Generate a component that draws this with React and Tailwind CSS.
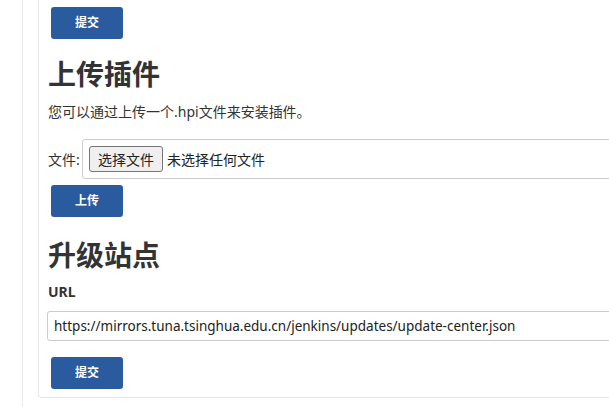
import React from 'react';

const font = { fontFamily: '"Noto Sans", "Noto Sans CJK SC", sans-serif' };

const BlueButton = ({ children }) => (
    <button className="ml-[3px] w-[72px] h-[32px] rounded-[3px] bg-[#2b5b9f] text-white text-[12px] font-bold">
        {children}
    </button>
);

export default function App() {
    return (
        <div className="w-[609px] h-[407px] overflow-hidden bg-white flex text-[#333]" style={font}>
            <div className="w-[22px] shrink-0" />
            <div className="border-l border-[#ececec] pl-[15px] h-full">
                {/* Card */}
                <div className="w-[640px] border-l border-r border-b border-[#e6e6e6] rounded-b-[4px] pl-[9px] pt-[7px] pb-[8px]">
                    <BlueButton>提交</BlueButton>

                    {/* Upload plugin */}
                    <h2 className="mt-[18px] text-[28px] leading-[34px] font-bold">上传插件</h2>
                    <p className="mt-[11px] text-[14px] leading-[20px]">您可以通过上传一个.hpi文件来安装插件。</p>

                    <div className="mt-[17px] flex items-center">
                        <span className="w-[34px] shrink-0 text-[14px] whitespace-nowrap">文件:</span>
                        <div className="flex-1 h-[40px] border border-[#cccccc] rounded-[3px] pl-[6px] flex items-center">
                            <span className="h-[26px] px-[8px] flex items-center border border-[#767676] rounded-[3px] bg-[#efefef] text-[14px] text-[#222]">
                                选择文件
                            </span>
                            <span className="ml-[4px] text-[14px] text-[#222]">未选择任何文件</span>
                        </div>
                    </div>
                    <div className="mt-[6px]">
                        <BlueButton>上传</BlueButton>
                    </div>

                    {/* Update site */}
                    <h2 className="mt-[21px] text-[28px] leading-[34px] font-bold">升级站点</h2>
                    <div className="mt-[10px] text-[14px] leading-[20px] font-bold">URL</div>
                    <div className="mt-[9px] -ml-[1px] h-[30px] border border-[#cccccc] rounded-[3px] pl-[6px] flex items-center text-[13.5px] text-[#222]">
                        https://mirrors.tuna.tsinghua.edu.cn/jenkins/updates/update-center.json
                    </div>
                    <div className="mt-[16px]">
                        <BlueButton>提交</BlueButton>
                    </div>
                </div>
            </div>
        </div>
    );
}
